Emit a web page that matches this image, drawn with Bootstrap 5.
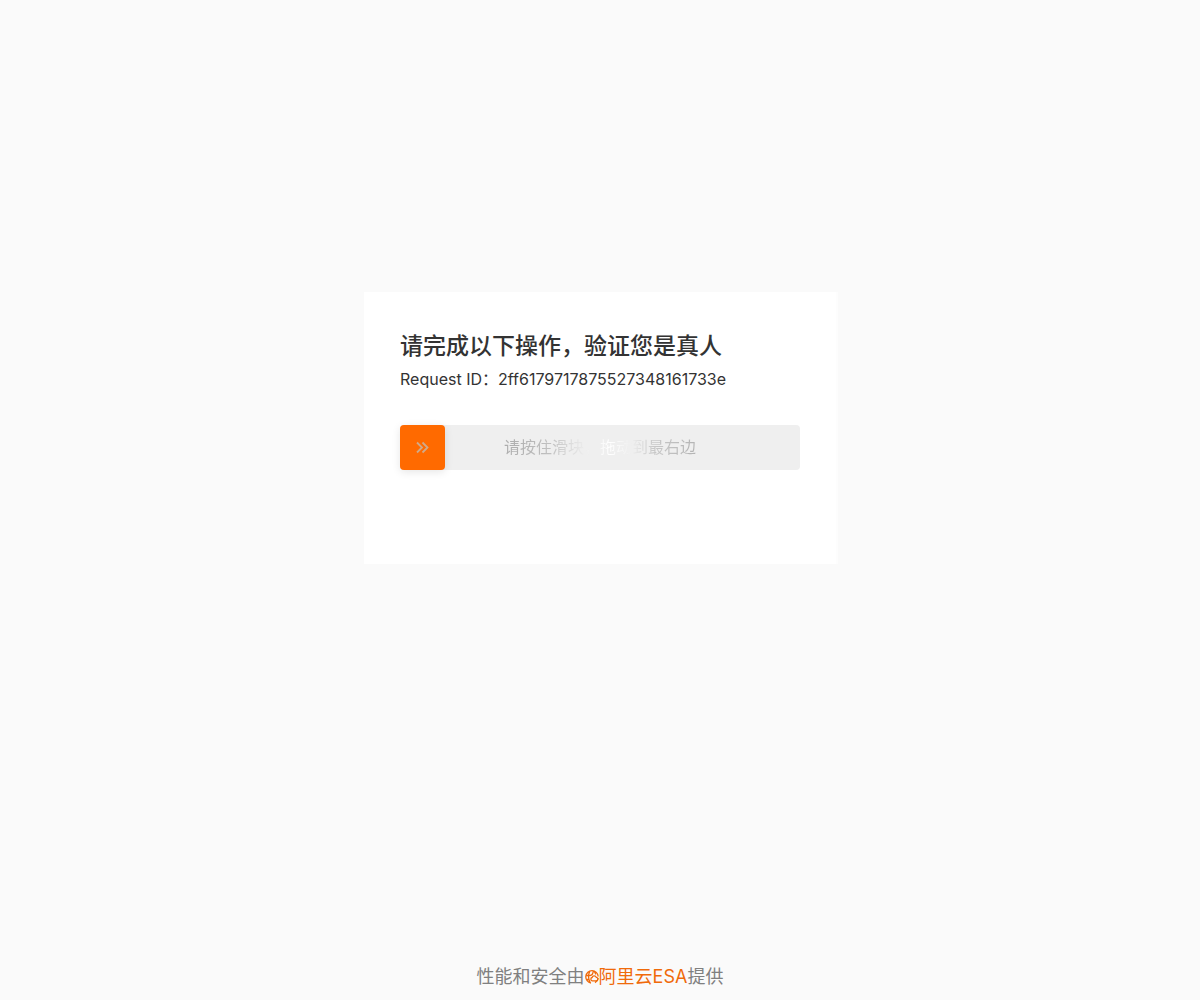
<!DOCTYPE html>
<html lang="zh-CN">
<head>
<meta charset="utf-8">
<meta name="viewport" content="width=device-width, initial-scale=1">
<title>请完成以下操作，验证您是真人</title>
<link rel="stylesheet" href="https://cdn.jsdelivr.net/npm/bootstrap@5.3.0/dist/css/bootstrap.min.css">
<style>
body{background:#fafafa;color:#333;font-family:Inter,"Noto Sans CJK SC",sans-serif}
.verify-wrap{padding-top:292px}
.verify-panel{max-width:472px;min-height:272px;background:#fff;padding:36px;box-shadow:2px 0 0 #fdfdfd}
.verify-title{font-size:23px;line-height:36px;font-weight:500}
.request-id{font-size:16px;line-height:30px}
.slide-track{height:45px;margin-top:31px;background:#efefef;border-radius:4px}
.slide-handle{width:45px;height:45px;background:#ff6a00;border-radius:4px;box-shadow:0 2px 8px rgba(0,0,0,.1)}
.slide-text{font-size:16px;line-height:45px;margin-right:45px;color:transparent;background:linear-gradient(90deg,#acacac 0%,#c0c0c0 24%,#efefef 43%,#fff 55%,#efefef 66%,#c8c8c8 78%,#b4b4b4 100%);-webkit-background-clip:text;background-clip:text}
.site-foot{font-size:18px;line-height:28px;color:#808080;padding-bottom:9px}
.esa-link{color:#f06a0a}
</style>
</head>
<body class="d-flex flex-column min-vh-100">
<main class="verify-wrap flex-grow-1">
  <section class="verify-panel mx-auto">
    <h1 class="verify-title mb-0">请完成以下操作，验证您是真人</h1>
    <p class="request-id mb-0">Request ID：2ff6179717875527348161733e</p>
    <div class="slide-track d-flex align-items-center">
      <button type="button" class="slide-handle border-0 p-0 d-flex align-items-center justify-content-center flex-shrink-0" aria-label="请按住滑块，拖动到最右边">
        <svg width="14" height="14" viewBox="0 0 14 14" fill="none" stroke="#d0aa8a" stroke-width="1.8" aria-hidden="true"><path d="M1 1.500L6 6.500L1 11.500M6.500 1.500L11.500 6.500L6.500 11.500"/></svg>
      </button>
      <div class="flex-grow-1 text-center"><span class="slide-text">请按住滑块，拖动到最右边</span></div>
    </div>
  </section>
</main>
<footer class="site-foot d-flex justify-content-center align-items-center">
  <span>性能和安全由</span><a class="esa-link d-flex align-items-center text-decoration-none" href="#"><svg width="14" height="14" viewBox="0 0 14 14" fill="none" stroke="currentColor" stroke-width="1.3" aria-hidden="true"><path d="M6 13A6.200 6.200 0 1 1 13.200 6.500M13.200 8A6.200 6.200 0 0 1 10 12.600M4.800 1.200C3.200 4.500 3.200 9 5.200 12.800M.8 5.500H5c2 0 3-1.500 3.300-4.600M1.200 9.500H4M9 1.200c1.200 1 1.500 2 1.700 3.300"/><path d="M7.200 10.800a1.700 1.700 0 0 1-.1-3.300 2.200 2.200 0 0 1 4.200-.1 1.700 1.700 0 0 1-.2 3.400z"/></svg><span>阿里云ESA</span></a><span>提供</span>
</footer>
<script src="https://cdn.jsdelivr.net/npm/bootstrap@5.3.0/dist/js/bootstrap.bundle.min.js"></script>
</body>
</html>
